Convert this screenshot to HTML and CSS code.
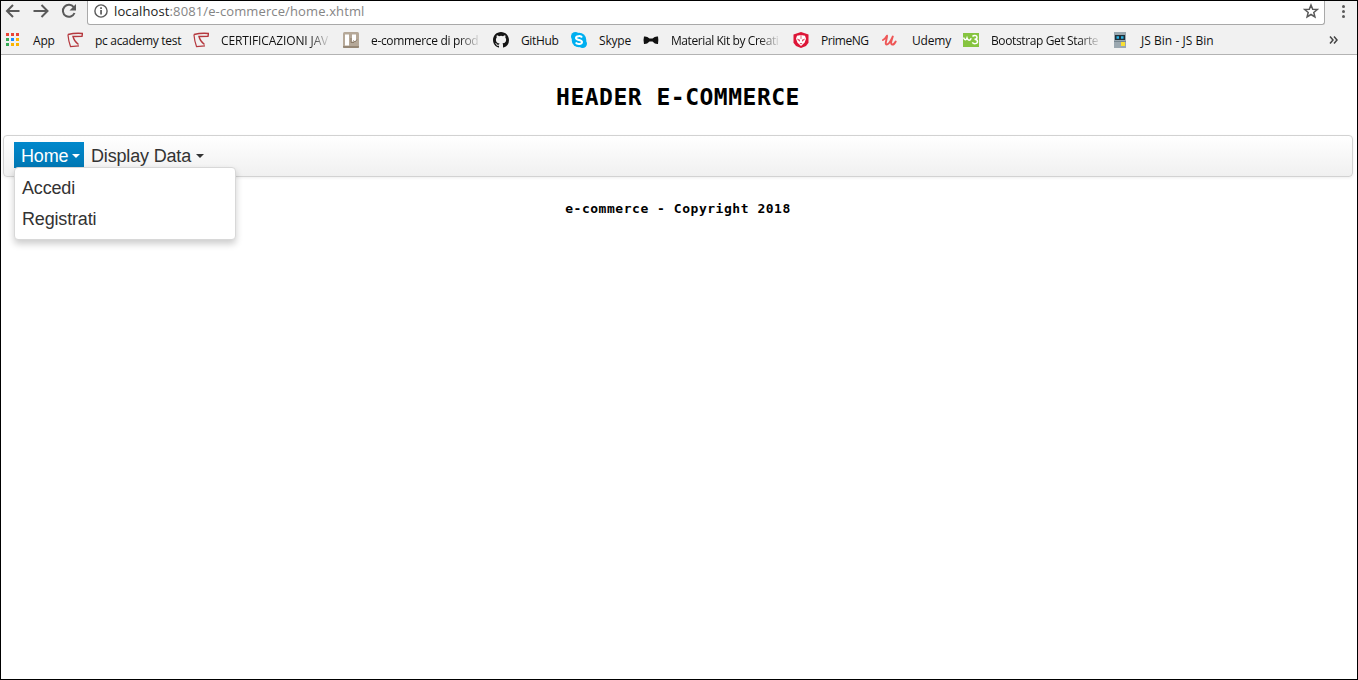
FILE: index.html
```html
<!DOCTYPE html>
<html lang="it">
<head>
<meta charset="utf-8">
<title>e-commerce</title>
<link rel="stylesheet" href="styles.css">
</head>
<body>
<div class="window">
  <div class="chrome">
    <div class="toolbar">
      <svg class="nav" width="86" height="24" viewBox="0 0 86 24" fill="none" stroke="#5a5a5a" stroke-width="2">
        <path d="M18.500 10H6M12 4L6 10l6 6M32.500 10H46M40.500 4l6 6-6 6"/>
        <path d="M72.700 6.200A6 6 0 1 0 73.500 12"/><path d="M75 3v6.500h-6.500z" fill="#5a5a5a" stroke="none"/>
      </svg>
      <div class="address">
        <svg width="14" height="14" viewBox="0 0 14 14"><circle cx="7" cy="7" r="6.100" fill="none" stroke="#5a5a5a" stroke-width="1.400"/><path d="M6.200 6h1.700v4.500H6.200zM6.200 3.200h1.700v1.700H6.200z" fill="#5a5a5a"/></svg>
        <span class="url"><b>localhost</b>:8081/e-commerce/home.xhtml</span>
        <svg class="star" width="16" height="16" viewBox="0 0 16 16"><path d="M8 2l1.700 4.200 4.600.3-3.500 3 1.100 4.400L8 11.500l-3.900 2.400 1.100-4.400-3.500-3 4.600-.3z" fill="none" stroke="#5a5a5a" stroke-width="1.500"/></svg>
      </div>
      <svg class="menu" width="32" height="24" viewBox="0 0 32 24" fill="#5a5a5a"><circle cx="18.500" cy="5.500" r="1.500"/><circle cx="18.500" cy="10.500" r="1.500"/><circle cx="18.500" cy="15.500" r="1.500"/></svg>
    </div>
    <div class="bookmarks">
      <div class="bm w-app"><svg width="16" height="16" viewBox="0 0 16 16"><path d="M1 1h3v3H1zM6 1h3v3H6zM11 1h3v3h-3z" fill="#ea4335"/><path d="M1 6h3v3H1zM1 11h3v3H1z" fill="#34a853"/><path d="M6 6h3v3H6z" fill="#1a8cff"/><path d="M11 6h3v3h-3zM6 11h3v3H6zM11 11h3v3h-3z" fill="#fbb400"/></svg><span>App</span></div>
      <div class="bm w-pc"><svg width="16" height="16" viewBox="0 0 16 16" fill="none" stroke="#b5383e"><path d="M1 2.500Q8 .8 15.500 1.500L15 4.200 6 4.500Q7 9 11.500 12.500" stroke-width="1.400"/><path d="M.9 2.500Q1.500 9 3.500 14.500L12 13.800" stroke-width="1.200"/></svg><span>pc academy test</span></div>
      <div class="bm w-cert"><svg width="16" height="16" viewBox="0 0 16 16" fill="none" stroke="#b5383e"><path d="M1 2.500Q8 .8 15.500 1.500L15 4.200 6 4.500Q7 9 11.500 12.500" stroke-width="1.400"/><path d="M.9 2.500Q1.500 9 3.500 14.500L12 13.800" stroke-width="1.200"/></svg><span class="fade">CERTIFICAZIONI JAV</span></div>
      <div class="bm w-trello"><svg width="16" height="16" viewBox="0 0 16 16"><rect width="16" height="16" rx="1.500" fill="#b5a898"/><path d="M0 14h16v1q0 1-1 1H1q-1 0-1-1z" fill="#968775"/><path d="M2 2.500h4v11H2zM9 2.500h4v7H9z" fill="#fff"/><path d="M8 6v4.500h3M10 8.500l2 1.500 2-2.500" fill="none" stroke="#8b7b69"/></svg><span class="fade">e-commerce di prod</span></div>
      <div class="bm w-git"><svg width="16" height="16" viewBox="0 0 16 16"><path fill="#151515" d="M8 0C3.580 0 0 3.580 0 8c0 3.540 2.290 6.530 5.470 7.590.4.070.55-.17.55-.38v-1.490c-2.230.49-2.690-.94-2.690-.94-.36-.92-.89-1.170-.89-1.170-.73-.5.050-.49.050-.49.810.060 1.230.83 1.230.83.72 1.230 1.870.88 2.330.67.070-.52.280-.88.510-1.080-1.780-.2-3.640-.89-3.640-3.950 0-.87.310-1.590.82-2.150-.08-.2-.36-1.020.08-2.120 0 0 .67-.21 2.200.82a7.600 7.600 0 0 1 4 0c1.530-1.040 2.200-.82 2.200-.82.44 1.100.16 1.920.08 2.120.51.560.82 1.270.82 2.150 0 3.070-1.870 3.750-3.650 3.950.29.250.54.730.54 1.480v2.190c0 .21.150.46.550.38A8 8 0 0 0 16 8c0-4.420-3.580-8-8-8z"/></svg><span>GitHub</span></div>
      <div class="bm w-skype"><svg width="16" height="16" viewBox="0 0 16 16"><g fill="#00aff0"><circle cx="8" cy="8" r="7.300"/><circle cx="4.400" cy="4.400" r="4.400"/><circle cx="11.600" cy="11.600" r="4.400"/></g><path d="M11 5.500C10 3.500 5 3.700 5 6c0 2.600 6 1.300 6 4 0 2.400-5 2.600-6.200.4" fill="none" stroke="#fff" stroke-width="2"/></svg><span>Skype</span></div>
      <div class="bm w-kit"><svg width="16" height="16" viewBox="0 0 16 16"><path d="M1 4.500Q4 4 6.500 6.500h3Q12 4 15 4.500q.7 3.500 0 7.500-3 .3-5.500-2.500h-3Q4 12.300 1 12q-1-4 0-7.500z" fill="#111"/></svg><span class="fade">Material Kit by Creati</span></div>
      <div class="bm w-prime"><svg width="16" height="16" viewBox="0 0 16 16"><path d="M8 0l7.500 2.500v8.300L13 14l-5 2-5-2L.5 10.800V2.500z" fill="#dd1537"/><path d="M4 3.800l4-.8 4 .8 1 3-1.500 4L8 14l-3.500-3.200-1.500-4z" fill="#fff"/><path d="M4 6.500l3 1.200v2L4.700 8zM12 6.500L9 7.700v2L11.300 8zM6.500 11h3L8 12.500zM7.600 3h.8v4h-.8z" fill="#df4a62"/></svg><span>PrimeNG</span></div>
      <div class="bm w-udemy"><svg width="16" height="16" viewBox="0 0 16 16"><path d="M1 8c2-1 3-2.500 4-4.300C5.500 6 2.200 12.500 4.700 12.500 7.200 12.500 9 8 10.800 4.500 9.800 8 8 12 10 12.500c1.500.3 3-1.500 3.700-3" fill="none" stroke="#ee5656" stroke-width="1.900" stroke-linecap="round" stroke-linejoin="round"/></svg><span>Udemy</span></div>
      <div class="bm w-boot"><svg width="16" height="16" viewBox="0 0 16 16"><rect y="1" width="16" height="14" fill="#86c440"/><path d="M.5 5.500c1 3 2.500 3 3.500.5 1 3 3 3 4.200.2M9.500 4.500c1-1.500 4.500-1.500 4.500.7 0 1.500-1.500 2-2.500 2 1.500 0 3 .7 3 2.300 0 2.700-4 2.700-5.200.8" fill="none" stroke="#fff" stroke-width="1.500"/></svg><span class="fade">Bootstrap Get Starte</span></div>
      <div class="bm w-bin"><svg width="16" height="16" viewBox="0 0 16 16"><path d="M1 0h12v16H1z" fill="#9ba8b0"/><path d="M2 3h10v5H2z" fill="#202e37"/><path d="M3.500 4.200H6v2.500H3.500zM8 4.200h2.500v2.500H8z" fill="#28b4e8"/><path d="M1 9h12v1H1z" fill="#788790"/><path d="M8 10h4v4H8z" fill="#f9df33"/></svg><span>JS Bin - JS Bin</span></div>
      <svg class="more" width="10" height="10" viewBox="0 0 10 10"><path d="M1 1.500L4 5 1 8.500M5 1.500L8 5 5 8.500" fill="none" stroke="#444" stroke-width="1.500"/></svg>
    </div>
  </div>
  <main>
    <h1>HEADER E-COMMERCE</h1>
    <nav class="navbar">
      <div class="drop active"><a>Home</a><i class="caret"></i>
        <div class="submenu"><a>Accedi</a><a>Registrati</a></div>
      </div>
      <div class="drop"><a>Display Data</a><i class="caret"></i></div>
    </nav>
    <footer>e-commerce - Copyright 2018</footer>
  </main>
</div>
</body>
</html>
```
FILE: styles.css
```css
* { box-sizing: border-box; }
body { margin: 0; background: #fff; overflow: hidden; }
.window { height: 680px; border: 1px solid #000; background: #fff; }
.chrome { height: 54px; background: #f1f1f1; border-bottom: 1px solid #b3b3b3; font-family: "Open Sans", "Noto Sans", sans-serif; }
.toolbar { display: flex; height: 24px; }
.nav, .menu { flex: none; display: block; }
.address { flex: 1; display: flex; align-items: center; gap: 6px; height: 24px; padding: 0 5px 3px 6px; background: #fff; border: 1px solid #a9a9a9; border-top: 0; border-radius: 0 0 3px 3px; }
.url { font-size: 13px; line-height: 20px; color: #858585; letter-spacing: .12px; white-space: nowrap; }
.url b { font-weight: 400; color: #222; }
.star { margin-left: auto; }
.bookmarks { display: flex; align-items: center; height: 29px; padding-left: 4px; }
.bm { flex: none; display: flex; align-items: center; gap: 12px; height: 20px; font-size: 12px; color: #111; white-space: nowrap; }
.bm svg { flex: none; }
.bm span { line-height: 18px; padding-top: 2px; letter-spacing: -.2px; }
.bm .fade { flex: none; width: 110px; mask-image: linear-gradient(to right, #000 80%, transparent); }
.w-app { width: 62px; }
.w-pc { width: 126px; }
.w-cert, .w-trello, .w-kit { width: 150px; }
.w-git { width: 78px; }
.w-skype { width: 72px; }
.w-prime { width: 89px; }
.w-udemy { width: 81px; }
.w-boot { width: 150px; }
.w-bin { width: 120px; }
.w-pc span { letter-spacing: -.3px; }
.w-cert span { letter-spacing: -.12px; }
.w-trello span { letter-spacing: -.33px; }
.w-git span { letter-spacing: -.35px; }
.w-prime span { letter-spacing: -.45px; }
.w-kit span { letter-spacing: -.42px; }
.w-boot span { letter-spacing: -.38px; }
.w-udemy { gap: 14px; }
.w-bin span { letter-spacing: .03px; }
.more { margin: 0 18px 0 auto; }
main { padding: 0 4px 0 2px; }
h1 { margin: 0; height: 80px; padding-top: 27px; text-align: center; font: bold 23px/30px "DejaVu Sans Mono", monospace; letter-spacing: .5px; color: #000; }
.navbar { display: flex; height: 42px; padding: 6px 10px; border: 1px solid #d2d2d2; border-radius: 4px; background: linear-gradient(#fff, #f0f0f0); box-shadow: 0 1px 3px rgba(0,0,0,.07); font: 18px/27px "Liberation Sans", Arial, sans-serif; letter-spacing: -.17px; color: #333; }
.drop { position: relative; display: flex; align-items: center; height: 26px; padding: 2px 4px 0 7px; gap: 5px; }
.active { width: 70px; gap: 4px; color: #fff; background: linear-gradient(#0088cc, #0077b3); }
.caret { border: 4px solid transparent; border-top-color: currentColor; border-bottom: 0; }
.submenu { position: absolute; top: 25px; left: 0; width: 222px; height: 73px; padding: 5px 7px; border: 1px solid #d8d8d8; border-radius: 4px; background: #fff; color: #333; box-shadow: 0 4px 7px rgba(0,0,0,.2); line-height: 31px; }
.submenu a { display: block; }
footer { padding-top: 22px; text-align: center; font: bold 13px/20px "DejaVu Sans Mono", monospace; letter-spacing: .53px; color: #000; }
```
